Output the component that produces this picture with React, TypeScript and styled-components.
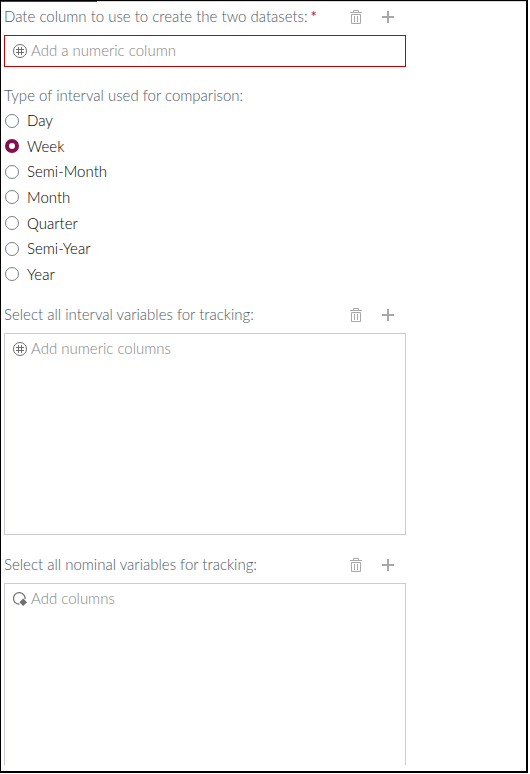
import React, { useState } from "react";
import styled, { createGlobalStyle, css } from "styled-components";

const GlobalStyle = createGlobalStyle`
  *, *::before, *::after { box-sizing: border-box; }
  body {
    margin: 0;
    background: #fff;
    color: #000;
    font-family: Lato, "Open Sans", sans-serif;
    font-size: 15px;
    font-weight: 300;
    line-height: 20px;
  }
`;

const Frame = styled.main`
  margin-right: 2px;
  border: solid #000;
  border-width: 1px 2px 2px 1px;
`;

const TabTrack = styled.div`
  height: 1px;
  background: #d9d9dc;
`;

const TabIndicator = styled.div`
  width: 96px;
  height: 1px;
  background: #0a4f9c;
`;

const Form = styled.form`
  max-width: 408px;
  padding: 0 3px 6px;
`;

const Header = styled.div`
  display: flex;
  align-items: center;
  height: 30px;
  margin-bottom: 3px;
  padding-right: 2px;
`;

const labelText = css`
  color: #4c5a68;
  font-size: 15px;
  font-weight: 300;
  line-height: 20px;
`;

const Label = styled.h2`
  ${labelText}
  flex: 1;
  margin: 0;
  padding-bottom: 2px;
  white-space: nowrap;
`;

const Required = styled.span`
  margin-left: 3px;
  color: #d0021b;
  font-weight: 400;
`;

const IconButton = styled.button`
  display: grid;
  place-items: center;
  width: 32px;
  height: 30px;
  padding: 0;
  border: 0;
  background: none;
  color: #a8a8a8;
  cursor: pointer;
`;

const DropZone = styled.div<{ $kind: "single" | "list" | "open" }>`
  border: 1px solid ${(p) => (p.$kind === "single" ? "#c80000" : "#cbcbd3")};
  ${(p) => p.$kind === "single" && "height: 32px; margin-bottom: 18px;"}
  ${(p) => p.$kind === "list" && "height: 202px; margin-bottom: 15px;"}
  ${(p) => p.$kind === "open" && "height: 182px; border-bottom: 0;"}
`;

const Hint = styled.div`
  display: flex;
  align-items: center;
  gap: 4px;
  height: 30px;
  padding-left: 8px;
  color: #858585;
  svg { color: #6e6e6e; }
`;

const HintText = styled.span`
  padding-bottom: 2px;
`;

const Group = styled.fieldset`
  min-width: 0;
  margin: 0 0 13px;
  padding: 0;
  border: 0;
`;

const Legend = styled.legend`
  ${labelText}
  margin-bottom: 3px;
  padding: 0;
`;

const Options = styled.div`
  display: grid;
  grid-auto-rows: 1fr;
  justify-items: start;
  height: 179px;
`;

const Option = styled.label`
  display: flex;
  align-items: center;
  gap: 8px;
  padding-left: 1px;
  cursor: pointer;
`;

const OptionText = styled.span`
  padding-bottom: 1px;
`;

const Radio = styled.input`
  appearance: none;
  width: 14px;
  height: 14px;
  margin: 0;
  border: 1px solid #78828f;
  border-radius: 50%;
  background: #fff;
  &:checked { border: 4px solid #830f4e; }
`;

const TrashIcon = () => (
  <svg width="14" height="16" viewBox="0 0 14 16" fill="none" stroke="currentColor" aria-hidden="true">
    <path d="M1 3.5h12M4.5 3.5v-2h5v2M2.5 5.5h9v9h-9zM5.5 7v6M8.5 7v6" />
  </svg>
);

const PlusIcon = () => (
  <svg width="12" height="12" viewBox="0 0 12 12" stroke="currentColor" strokeWidth="2" aria-hidden="true">
    <path d="M0 6h12M6 0v12" />
  </svg>
);

const NumericIcon = () => (
  <svg width="14" height="14" viewBox="0 0 14 14" fill="none" stroke="currentColor" aria-hidden="true">
    <circle cx="7" cy="7" r="6.5" />
    <path d="M5.5 3v8M8.5 3v8M3 5.5h8M3 8.5h8" />
  </svg>
);

const ColumnIcon = () => (
  <svg width="14" height="14" viewBox="0 0 14 14" fill="none" stroke="currentColor" aria-hidden="true">
    <path d="M6.5 12.2A5.8 5.8 0 1 1 12 7.2" strokeWidth="1.2" />
    <path d="M10.2 6.5 14 10.3 10.2 14 6.5 10.3z" fill="currentColor" stroke="none" />
  </svg>
);

interface ColumnFieldProps {
  id: string;
  label: string;
  hint: string;
  kind: "single" | "list" | "open";
  icon: React.ReactNode;
  required?: boolean;
}

function ColumnField({ id, label, hint, kind, icon, required }: ColumnFieldProps) {
  return (
    <section aria-labelledby={id}>
      <Header>
        <Label id={id}>
          {label}
          {required && <Required>*</Required>}
        </Label>
        <IconButton type="button" aria-label="Remove column"><TrashIcon /></IconButton>
        <IconButton type="button" aria-label="Add column"><PlusIcon /></IconButton>
      </Header>
      <DropZone $kind={kind}>
        <Hint>{icon}<HintText>{hint}</HintText></Hint>
      </DropZone>
    </section>
  );
}

const intervals = ["Day", "Week", "Semi-Month", "Month", "Quarter", "Semi-Year", "Year"];

export default function App() {
  const [interval, setInterval] = useState("Week");
  return (
    <>
      <GlobalStyle />
      <Frame>
        <TabTrack><TabIndicator /></TabTrack>
        <Form>
          <ColumnField id="date" label="Date column to use to create the two datasets:" hint="Add a numeric column" kind="single" icon={<NumericIcon />} required />
          <Group>
            <Legend>Type of interval used for comparison:</Legend>
            <Options>
              {intervals.map((name) => (
                <Option key={name}>
                  <Radio type="radio" name="interval" value={name} checked={interval === name} onChange={() => setInterval(name)} />
                  <OptionText>{name}</OptionText>
                </Option>
              ))}
            </Options>
          </Group>
          <ColumnField id="interval-vars" label="Select all interval variables for tracking:" hint="Add numeric columns" kind="list" icon={<NumericIcon />} />
          <ColumnField id="nominal-vars" label="Select all nominal variables for tracking:" hint="Add columns" kind="open" icon={<ColumnIcon />} />
        </Form>
      </Frame>
    </>
  );
}
